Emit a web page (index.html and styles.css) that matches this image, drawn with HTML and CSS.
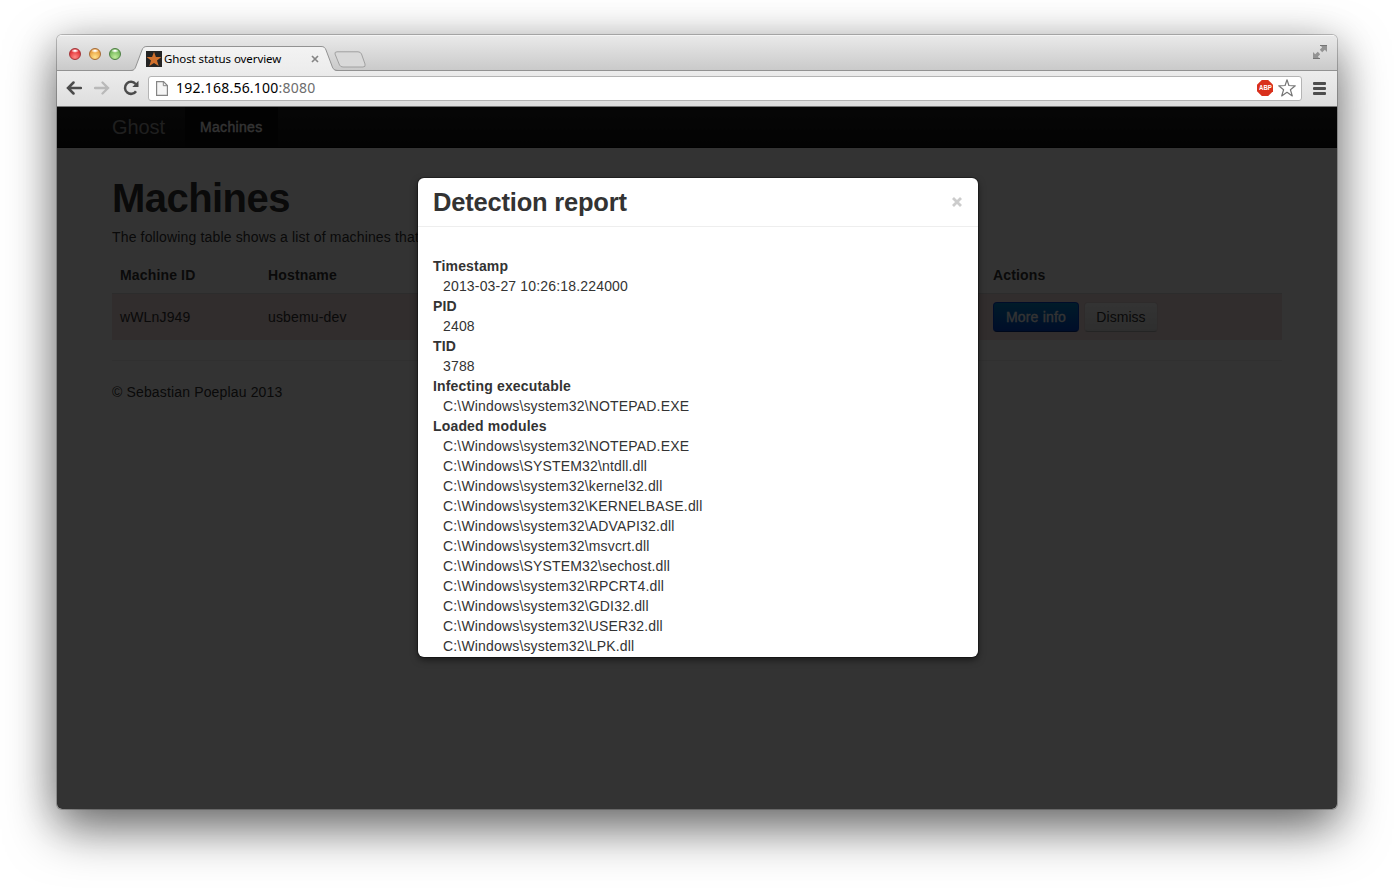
FILE: index.html
```
<!DOCTYPE html>
<html lang="en">
<head>
<meta charset="utf-8">
<title>Ghost status overview</title>
<link rel="stylesheet" href="styles.css">
</head>
<body>
<div class="window">
  <header class="chrome">
    <div class="tabstrip">
      <div class="lights"><i class="light red"></i><i class="light amber"></i><i class="light green"></i></div>
      <div class="tab">
        <svg class="tab-shape" width="209" height="26" viewBox="0 0 209 26">
          <defs><linearGradient id="tabfill" x2="0" y2="1"><stop offset="0" stop-color="#f3f3f3"/><stop offset="1" stop-color="#ececec"/></linearGradient></defs>
          <path d="M0 26V25C4 25 5 23 6 20L12 4C13 1.500 14 .5 17 .5H191C194 .5 195 1.500 196 4L202 20C203 23 204 25 209 25V26Z" fill="url(#tabfill)"/>
          <path d="M0 24.500C4 24.500 5 23 6 20L12 4C13 1.500 14 .5 17 .5H191C194 .5 195 1.500 196 4L202 20C203 23 204 24.500 209 24.500" fill="none" stroke="#929292"/>
        </svg>
        <div class="tab-content">
          <svg width="16" height="16" viewBox="0 0 16 16"><path fill="#242424" d="M0 0h16v16H0z"/><path fill="#d0702c" d="M8 .8l1.900 5.200 5.500.1-4.400 3.400 1.700 5.500L8 11.900 3.300 15 5 9.500.6 6.100 6.100 6z"/></svg>
          <span class="tab-title">Ghost status overview</span>
          <svg class="tab-close" width="8" height="8" viewBox="0 0 8 8"><path d="M1 1l6 6M7 1L1 7" stroke="#858585" stroke-width="1.700"/></svg>
        </div>
      </div>
      <svg class="newtab" width="34" height="17" viewBox="0 0 34 17"><path d="M4 .8H25Q27.500.8 28.500 3L32 13Q33 16 30 16H10Q7.500 16 6.500 14L2 3Q1.500.8 4 .8Z" fill="#d9d9d9" stroke="#a0a0a0"/></svg>
      <svg class="expand" width="14" height="14" viewBox="0 0 14 14" fill="#939393"><path d="M7 0h7v7l-2.200-2.200-2.600 2.400-2.400-2.400 2.400-2.600zM7 14H0V7l2.200 2.200 2.600-2.400 2.400 2.400-2.400 2.600z"/><path d="M7 .5h7M0 13.500h7" stroke="#747474"/></svg>
    </div>
    <div class="toolbar">
      <svg class="back" width="16" height="14" viewBox="0 0 16 14" fill="none" stroke="#4b4b4b" stroke-width="2.500"><path d="M7.500 1.500L2 7l5.500 5.500M2 7h13" stroke-linecap="round"/></svg>
      <svg class="forward" width="16" height="14" viewBox="0 0 16 14" fill="none" stroke="#b9b9b9" stroke-width="2.300"><path d="M8.500 1.500L14 7l-5.500 5.500M14 7H1" stroke-linecap="round"/></svg>
      <svg class="reload" width="16" height="16" viewBox="0 0 16 16"><path d="M13 11.200A6 6 0 1 1 12.600 4" fill="none" stroke="#4b4b4b" stroke-width="2.500"/><path d="M15.500.8V7H9.300z" fill="#4b4b4b"/></svg>
      <div class="omnibox">
        <svg width="12" height="15" viewBox="0 0 12 15"><path d="M.6.6H7.500L11.400 4.500V14.400H.6Z" fill="#f5f5f5" stroke="#858585" stroke-width="1.200"/><path d="M7.300.6V4.700H11.400" fill="none" stroke="#858585"/></svg>
        <span class="url">192.168.56.100<span class="port">:8080</span></span>
        <span class="abp"><span>ABP</span></span>
        <svg class="star" width="18" height="18" viewBox="0 0 18 18"><path d="M9 .8l1.900 5.700 6.400.3-4.900 4 1.900 6.100L9 13.300l-5.300 3.600 1.900-6.100-4.900-4 6.400-.3z" fill="#fff" stroke="#777" stroke-width="1.200" stroke-linejoin="round"/></svg>
      </div>
      <div class="menu"><i></i><i></i><i></i></div>
    </div>
  </header>
  <div class="viewport">
    <nav class="navbar"><span class="brand">Ghost</span><span class="nav-item">Machines</span></nav>
    <main class="container">
      <h1>Machines</h1>
      <p class="intro">The following table shows a list of machines that</p>
      <div class="row head"><span>Machine ID</span><span>Hostname</span><span>Actions</span></div>
      <div class="row error"><span>wWLnJ949</span><span>usbemu-dev</span><span class="actions"><button class="btn primary">More info</button><button class="btn">Dismiss</button></span></div>
      <hr>
      <footer>© Sebastian Poeplau 2013</footer>
    </main>
    <div class="backdrop">
      <section class="modal">
        <div class="modal-header"><h3>Detection report</h3><span class="close"><svg width="10" height="10" viewBox="0 0 10 10"><path d="M1 1l8 8M9 1L1 9" stroke="#ccc" stroke-width="2.800"/></svg></span></div>
        <dl>
          <dt>Timestamp</dt><dd>2013-03-27 10:26:18.224000</dd>
          <dt>PID</dt><dd>2408</dd>
          <dt>TID</dt><dd>3788</dd>
          <dt>Infecting executable</dt><dd>C:\Windows\system32\NOTEPAD.EXE</dd>
          <dt>Loaded modules</dt>
          <dd>C:\Windows\system32\NOTEPAD.EXE</dd>
          <dd>C:\Windows\SYSTEM32\ntdll.dll</dd>
          <dd>C:\Windows\system32\kernel32.dll</dd>
          <dd>C:\Windows\system32\KERNELBASE.dll</dd>
          <dd>C:\Windows\system32\ADVAPI32.dll</dd>
          <dd>C:\Windows\system32\msvcrt.dll</dd>
          <dd>C:\Windows\SYSTEM32\sechost.dll</dd>
          <dd>C:\Windows\system32\RPCRT4.dll</dd>
          <dd>C:\Windows\system32\GDI32.dll</dd>
          <dd>C:\Windows\system32\USER32.dll</dd>
          <dd>C:\Windows\system32\LPK.dll</dd>
        </dl>
      </section>
    </div>
  </div>
</div>
</body>
</html>
```
FILE: styles.css
```
* { box-sizing: border-box; }
body { margin: 0; height: 888px; padding: 35px 57px 0; overflow: hidden; background: #fff; font: 14px/20px "Liberation Sans", Arial, sans-serif; color: #333; }
svg { display: block; flex: none; }
.window { width: 1280px; height: 774px; border-radius: 5px; overflow: hidden; box-shadow: 0 0 0 1px rgba(0,0,0,.22), 0 20px 50px rgba(0,0,0,.52), 0 6px 40px rgba(0,0,0,.2); display: flex; flex-direction: column; }
.chrome { height: 72px; flex: none; border-bottom: 1px solid #777; }
.tabstrip { height: 36px; display: flex; align-items: flex-start; background: linear-gradient(#e9e9e9, #c9c9c9); border-top: 1px solid #f5f5f5; box-shadow: inset 0 -1px #929292; }
.lights { display: flex; gap: 8px; padding: 12px 0 0 12px; width: 76px; }
.light { width: 12px; height: 12px; border-radius: 50%; border: 1px solid; }
.red { background: radial-gradient(ellipse 4px 2px at 50% 18%, #fff 20%, transparent), radial-gradient(circle at 50% 80%, #ff8a85, #e0292f 75%); border-color: #a33438; }
.amber { background: radial-gradient(ellipse 4px 2px at 50% 18%, #fff 20%, transparent), radial-gradient(circle at 50% 80%, #ffe28c, #e79a38 75%); border-color: #a66b35; }
.green { background: radial-gradient(ellipse 4px 2px at 50% 18%, #fff 20%, transparent), radial-gradient(circle at 50% 80%, #c0ec9c, #6db354 75%); border-color: #4c7f42; }
.tab { width: 209px; height: 26px; margin-top: 10px; margin-left: -3px; display: grid; }
.tab > * { grid-area: 1 / 1; }
.tab-content { display: flex; align-items: flex-start; padding: 5px 0 0 16px; color: #000; font: 11.500px/16px "Noto Sans", sans-serif; white-space: nowrap; }
.tab-title { width: 149px; padding-left: 2px; letter-spacing: -.08px; }
.tab-close { margin-top: 4px; }
.newtab { margin-top: 15px; margin-left: -6px; }
.expand { margin: 9px 10px 0 auto; }
.toolbar { height: 35px; display: flex; align-items: center; background: linear-gradient(#ececec, #dedede); padding: 0 11px 1px 9px; }
.forward { margin-left: 12px; }
.reload { margin-left: 13px; }
.omnibox { width: 1154px; height: 25px; margin-left: 9px; background: #fff; border: 1px solid #b4b4b4; border-radius: 3px; display: flex; align-items: center; padding: 0 5px 0 7px; }
.url { flex: 1; padding-left: 8px; color: #000; font: 14px/20px "Noto Sans", sans-serif; letter-spacing: .23px; }
.port { color: #6d6d6d; }
.abp { width: 16px; height: 16px; background: #d9301c; color: #fff; clip-path: polygon(30% 0, 70% 0, 100% 30%, 100% 70%, 70% 100%, 30% 100%, 0 70%, 0 30%); font: bold 8px/16px "Liberation Sans", sans-serif; display: flex; justify-content: center; }
.abp span { transform: scaleX(.75); }
.star { margin-left: 5px; }
.menu { margin-left: 11px; width: 13px; display: grid; gap: 2px; }
.menu i { height: 3px; border-radius: 1px; background: #4d4d4d; }
.viewport { flex: 1; position: relative; background: #fff; overflow: hidden; }
.navbar { height: 41px; display: flex; padding-left: 55px; background: linear-gradient(#222, #111); border-bottom: 1px solid #050505; line-height: 40px; }
.brand { width: 73px; font-size: 20px; color: #999; letter-spacing: -.1px; }
.nav-item { width: 93px; padding-left: 15px; background: #0b0b0b; color: #fff; -webkit-text-stroke: .35px #fff; letter-spacing: .33px; }
.container { width: 1170px; margin-left: 55px; padding-top: 30px; letter-spacing: .15px; }
h1 { margin: 0; font-size: 40px; line-height: 41px; letter-spacing: -.55px; }
.intro { margin: 8px 0 10px; }
.row { display: grid; grid-template-columns: 148px 725px 1fr; align-items: center; padding-left: 8px; }
.head { height: 36px; font-weight: bold; }
.error { height: 47px; background: #f2dede; border-top: 1px solid #ddd; }
.actions { display: flex; gap: 5px; }
.btn { width: 74px; height: 30px; padding: 0; border: 1px solid #e3d6d6; border-bottom-color: #b3b3b3; border-radius: 4px; background: linear-gradient(#fff, #e6e6e6); color: #333; font: 14px/20px "Liberation Sans", sans-serif; letter-spacing: .05px; }
.primary { width: 86px; color: #fff; border-color: #04c #04c #002a80; background: linear-gradient(#08c, #04c); -webkit-text-stroke: .3px #fff; letter-spacing: .2px; }
hr { border: 0; border-top: 1px solid #eee; margin: 20px 0 21px; }
.backdrop { position: absolute; inset: 0; background: rgba(0,0,0,.8); padding: 71px 0 0 361px; }
.modal { width: 560px; height: 479px; overflow: hidden; background: #fff; border-radius: 6px; box-shadow: 0 3px 7px rgba(0,0,0,.5), 0 0 0 1px rgba(0,0,0,.3); }
.modal-header { height: 49px; padding: 9px 16px 0 15px; display: flex; justify-content: space-between; border-bottom: 1px solid #eee; }
h3 { margin: 0; font-size: 25.500px; line-height: 31px; letter-spacing: -.2px; }
.close { padding-top: 10px; }
dl { margin: 0; padding: 29px 15px; letter-spacing: .17px; }
dt { font-weight: bold; }
dd { margin-left: 10px; }
```
